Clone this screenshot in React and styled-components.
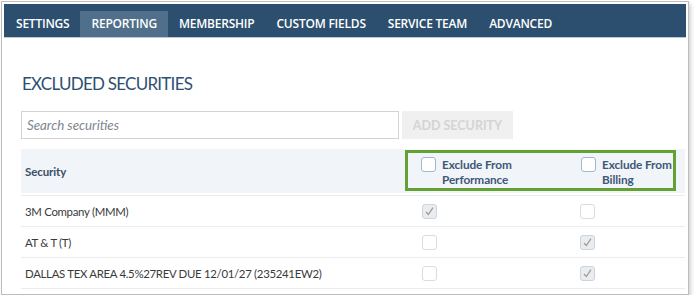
import React from "react"
import styled, { createGlobalStyle } from "styled-components"

const GlobalStyle = createGlobalStyle`
  body {
    margin: 0;
    background: #ffffff;
    font-family: "Lato", "Open Sans", sans-serif;
  }
`

const Frame = styled.div`
  margin: 1px 0 0 1px;
  width: 682px;
  height: 288px;
  padding: 2px;
  border: 1px solid #bdbdbd;
  box-shadow: 2px 3px 4px rgba(0, 0, 0, 0.18);
  background: #fff;
  display: flex;
  flex-direction: column;
  overflow: hidden;
`

const NavBar = styled.nav`
  display: flex;
  align-items: flex-end;
  height: 33px;
  padding-left: 1px;
  background: #2c4f6f;
  border-bottom: 1px solid #b9c9d8;
`

const NavItem = styled.div`
  height: 26px;
  display: flex;
  align-items: center;
  padding: 0 11px;
  padding-bottom: 1px;
  box-sizing: border-box;
  font-family: "Open Sans", sans-serif;
  font-size: 12px;
  font-weight: 600;
  letter-spacing: -0.22px;
  color: #ffffff;
  background: ${p => (p.$active ? "#506f8b" : "transparent")};
`

const Content = styled.div`
  padding: 0 1px 0 17px;
  display: flex;
  flex-direction: column;
`

const Title = styled.h1`
  margin: 34px 0 0 1px;
  font-size: 17px;
  line-height: 24px;
  font-weight: 400;
  color: #2d5072;
  letter-spacing: -0.75px;
`

const SearchRow = styled.div`
  display: flex;
  gap: 3px;
  margin-top: 15px;
`

const SearchInput = styled.input`
  width: 378px;
  height: 28px;
  box-sizing: border-box;
  border: 1px solid #d3d3d3;
  padding: 0 5px;
  font-family: inherit;
  font-size: 13.3px;
  outline: none;
  &::placeholder {
    font-style: italic;
    color: #7d8590;
  }
`

const AddButton = styled.button`
  width: 111px;
  height: 28px;
  border: none;
  background: #f0f0f0;
  color: #d4d4d4;
  font-family: inherit;
  font-size: 12.5px;
  font-weight: 700;
`

const Table = styled.div`
  margin-top: 10px;
  display: flex;
  flex-direction: column;
`

const HeaderRow = styled.div`
  display: flex;
  height: 44px;
  background: #f1f4f8;
  padding-right: 9px;
  margin-bottom: 2px;
`

const HeaderLabel = styled.div`
  flex: 1;
  display: flex;
  align-items: center;
  padding-left: 4px;
  font-size: 11.5px;
  font-weight: 700;
  letter-spacing: -0.1px;
  color: #3b4e66;
`

const Highlight = styled.div`
  width: 271px;
  box-sizing: border-box;
  height: 41px;
  margin-top: 1px;
  border: 3px solid #63a232;
  display: flex;
`

const HeaderCheckCell = styled.div`
  width: ${p => p.$w}px;
  display: flex;
  align-items: flex-start;
  gap: 6px;
  padding: 4px 0 0 13px;
  box-sizing: border-box;
  white-space: nowrap;
  font-size: 11.8px;
  font-weight: 700;
  letter-spacing: -0.1px;
  line-height: 15px;
  color: #3e5877;
`

const Row = styled.div`
  display: grid;
  grid-template-columns: 1fr 158px 118px;
  height: 30px;
  align-items: center;
  border-top: 1px solid #ececec;
  &:last-child {
    border-bottom: 1px solid #ececec;
  }
`

const Cell = styled.div`
  padding-left: ${p => (p.$check ? 13 : 4)}px;
  font-size: 11.4px;
  letter-spacing: -0.3px;
  color: #3a3a3a;
  display: flex;
  align-items: center;
`

const Box = styled.span`
  width: 15px;
  height: 15px;
  box-sizing: border-box;
  flex-shrink: 0;
  border-radius: 3px;
  border: 1px solid ${p => (p.$checked ? "#c5d6e6" : p.$header ? "#9db9d6" : "#dcdcdc")};
  background: ${p => (p.$checked ? "#ececec" : "#fff")};
  display: flex;
  align-items: center;
  justify-content: center;
`

const Check = ({ checked, header }) => (
  <Box $checked={checked} $header={header}>
    {checked && (
      <svg width="11" height="11" viewBox="0 0 11 11">
        <path d="M2 6 L4.3 8.6 L9 1.6" fill="none" stroke="#9a9a9a" strokeWidth="1.2" />
      </svg>
    )}
  </Box>
)

const tabs = ["SETTINGS", "REPORTING", "MEMBERSHIP", "CUSTOM FIELDS", "SERVICE TEAM", "ADVANCED"]

const rows = [
  { name: "3M Company (MMM)", perf: true, billing: false },
  { name: "AT & T (T)", perf: false, billing: true },
  { name: "DALLAS TEX AREA 4.5%27REV DUE 12/01/27 (235241EW2)", perf: false, billing: true },
]

export default function App() {
  return (
    <>
      <GlobalStyle />
      <Frame>
        <NavBar>
          {tabs.map(t => (
            <NavItem key={t} $active={t === "REPORTING"}>{t}</NavItem>
          ))}
        </NavBar>
        <Content>
          <Title>EXCLUDED SECURITIES</Title>
          <SearchRow>
            <SearchInput placeholder="Search securities" />
            <AddButton>ADD SECURITY</AddButton>
          </SearchRow>
          <Table>
            <HeaderRow>
              <HeaderLabel>Security</HeaderLabel>
              <Highlight>
                <HeaderCheckCell $w={160}>
                  <Check header />
                  <span>Exclude From<br />Performance</span>
                </HeaderCheckCell>
                <HeaderCheckCell $w={105}>
                  <Check header />
                  <span>Exclude From<br />Billing</span>
                </HeaderCheckCell>
              </Highlight>
            </HeaderRow>
            {rows.map(r => (
              <Row key={r.name}>
                <Cell>{r.name}</Cell>
                <Cell $check><Check checked={r.perf} /></Cell>
                <Cell $check><Check checked={r.billing} /></Cell>
              </Row>
            ))}
          </Table>
        </Content>
      </Frame>
    </>
  )
}
